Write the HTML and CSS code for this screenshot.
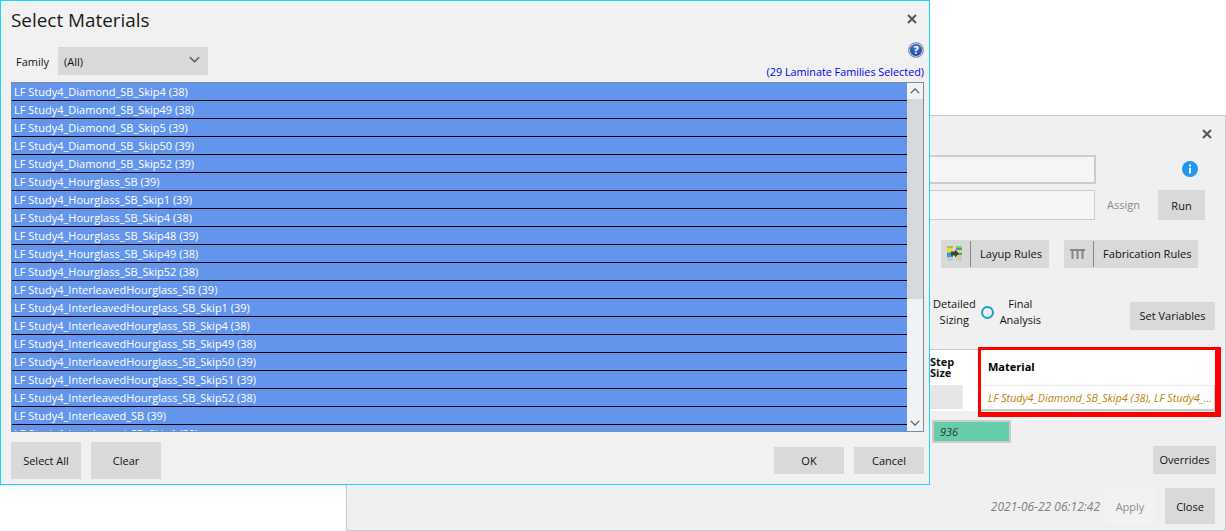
FILE: index.html
```html
<!DOCTYPE html>
<html lang="en">
<head>
<meta charset="utf-8">
<title>Select Materials</title>
<link rel="stylesheet" href="styles.css">
</head>
<body>
<div class="desktop">

  <section class="window back">
    <div class="back-title">
      <svg class="x" viewBox="0 0 10 10"><path d="M1 1L9 9M9 1L1 9"/></svg>
    </div>
    <div class="b-row r1">
      <div class="input thick"></div>
      <span class="info-slot"><svg class="info" viewBox="0 0 16 16"><circle cx="8" cy="8" r="8" fill="#2196f3"/><rect x="7" y="3.5" width="2" height="2" fill="#fff"/><rect x="7" y="6.8" width="2" height="5.7" fill="#fff"/></svg></span>
    </div>
    <div class="b-row r2">
      <div class="input thin"></div>
      <span class="assign">Assign</span>
      <button class="btn run">Run</button>
    </div>
    <div class="b-row r3">
      <button class="btn split layup">
        <span class="ico"><svg viewBox="0 0 15 15" width="15" height="15"><rect x="0" y="0" width="6" height="2" fill="#9ac653"/><rect x="0" y="2" width="6" height="4" fill="#e8dc3a"/><rect x="0" y="6" width="6" height="1" fill="#9ac653"/><rect x="0" y="7" width="6" height="4" fill="#2f9be8"/><rect x="0" y="11" width="6" height="4" fill="#c9c9c9"/><rect x="9" y="0" width="6" height="2" fill="#9ac653"/><rect x="9" y="2" width="6" height="2" fill="#2f9be8"/><rect x="9" y="4" width="6" height="3" fill="#e8dc3a"/><rect x="9" y="7" width="6" height="2" fill="#2f9be8"/><rect x="9" y="9" width="6" height="2" fill="#e8dc3a"/><rect x="9" y="11" width="6" height="4" fill="#c9c9c9"/><path d="M4 5.5h4V3.5L12 7.5l-4 4v-2H4z" fill="#3f3f3f"/></svg></span>
        <span class="lbl">Layup Rules</span>
      </button>
      <button class="btn split fab">
        <span class="ico"><svg viewBox="0 0 15 10" width="15" height="10"><path d="M0 1h15" stroke="#858585" stroke-width="2" fill="none"/><path d="M2.500 1v9M7.500 1v9M12.500 1v9" stroke="#858585" stroke-width="2" fill="none"/></svg></span>
        <span class="lbl">Fabrication Rules</span>
      </button>
    </div>
    <div class="b-row r4">
      <div class="steps">
        <span class="step-label">Detailed<br>Sizing</span>
        <span class="radio"></span>
        <span class="step-label">Final<br>Analysis</span>
      </div>
      <button class="btn setvars">Set Variables</button>
    </div>
    <div class="b-row r5">
      <div class="grid-wrap">
        <div class="cell head step">Step<br>Size</div>
        <div class="cell head mat">Material</div>
        <div class="cell stepval"></div>
        <div class="cell spacer"></div>
        <div class="cell matval">LF Study4_Diamond_SB_Skip4 (38), LF Study4_...</div>
        <div class="redbox"></div>
      </div>
    </div>
    <div class="b-row r6">
      <div class="total"><span>936</span></div>
    </div>
    <div class="b-row r7">
      <button class="btn overrides">Overrides</button>
    </div>
    <div class="b-row r8">
      <span class="stamp">2021-06-22 06:12:42</span>
      <button class="btn apply">Apply</button>
      <button class="btn close">Close</button>
    </div>
  </section>

  <section class="window front">
    <header class="f-title">
      <h1>Select Materials</h1>
      <svg class="x" viewBox="0 0 10 10"><path d="M1 1L9 9M9 1L1 9"/></svg>
    </header>
    <div class="f-filter">
      <div class="family">
        <span class="family-label">Family</span>
        <div class="select"><span>(All)</span>
          <svg class="chev" viewBox="0 0 12 7"><path d="M1 1l5 5 5-5"/></svg>
        </div>
      </div>
      <div class="summary">
        <span class="help">?</span>
        <span class="selected">(29 Laminate Families Selected)</span>
      </div>
    </div>
    <div class="list">
      <ul class="items">
        <li>LF Study4_Diamond_SB_Skip4 (38)</li>
        <li>LF Study4_Diamond_SB_Skip49 (38)</li>
        <li>LF Study4_Diamond_SB_Skip5 (39)</li>
        <li>LF Study4_Diamond_SB_Skip50 (39)</li>
        <li>LF Study4_Diamond_SB_Skip52 (39)</li>
        <li>LF Study4_Hourglass_SB (39)</li>
        <li>LF Study4_Hourglass_SB_Skip1 (39)</li>
        <li>LF Study4_Hourglass_SB_Skip4 (38)</li>
        <li>LF Study4_Hourglass_SB_Skip48 (39)</li>
        <li>LF Study4_Hourglass_SB_Skip49 (38)</li>
        <li>LF Study4_Hourglass_SB_Skip52 (38)</li>
        <li>LF Study4_InterleavedHourglass_SB (39)</li>
        <li>LF Study4_InterleavedHourglass_SB_Skip1 (39)</li>
        <li>LF Study4_InterleavedHourglass_SB_Skip4 (38)</li>
        <li>LF Study4_InterleavedHourglass_SB_Skip49 (38)</li>
        <li>LF Study4_InterleavedHourglass_SB_Skip50 (39)</li>
        <li>LF Study4_InterleavedHourglass_SB_Skip51 (39)</li>
        <li>LF Study4_InterleavedHourglass_SB_Skip52 (38)</li>
        <li>LF Study4_Interleaved_SB (39)</li>
        <li>LF Study4_Interleaved_SB_Skip1 (39)</li>
      </ul>
      <div class="scrollbar">
        <div class="sb-arrow"><svg viewBox="0 0 12 7"><path d="M1 6l5-5 5 5"/></svg></div>
        <div class="sb-thumb"></div>
        <div class="sb-track"></div>
        <div class="sb-arrow"><svg viewBox="0 0 12 7"><path d="M1 1l5 5 5-5"/></svg></div>
      </div>
    </div>
    <footer class="f-foot">
      <div class="foot-left">
        <button class="btn wide">Select All</button>
        <button class="btn wide">Clear</button>
      </div>
      <div class="foot-right">
        <button class="btn wide short">OK</button>
        <button class="btn wide short">Cancel</button>
      </div>
    </footer>
  </section>

</div>
</body>
</html>
```

FILE: styles.css
```css
* { box-sizing: border-box; }
html, body { margin: 0; padding: 0; background: #fff; }
body { font-family: "Open Sans", "Noto Sans", sans-serif; font-size: 11px; color: #111; overflow: hidden; }
.desktop { position: relative; width: 1226px; height: 531px; overflow: hidden; }
.window { position: absolute; }
button { font: inherit; border: 0; padding: 0; color: #111; }
.btn { background: #d9d9d9; display: flex; align-items: center; justify-content: center; }
.x { width: 10px; height: 10px; }
.x path { stroke: #555; stroke-width: 2; fill: none; }

/* back window */
.back { left: 346px; top: 115px; width: 880px; height: 416px; background: #f0f0f0; border: 1px solid #c8c8c8; display: flex; flex-direction: column; }
.back-title { height: 37px; display: flex; align-items: center; justify-content: flex-end; padding: 0 13px 2px 0; }
.b-row { display: flex; justify-content: flex-end; align-items: flex-start; }
.input { background: #f5f5f5; width: 400px; }
.input.thick { height: 29px; border: 2px solid #ccc; border-left: 0; }
.input.thin { height: 30px; border: 1px solid #ccc; border-left: 0; }
.r1 { margin-top: 2px; padding-right: 129px; height: 35px; position: relative; }
.info-slot { position: absolute; right: 27px; top: 6px; display: flex; }
.info { width: 16px; height: 16px; }
.r2 { height: 30px; padding-right: 20px; align-items: center; }
.assign { width: 63px; padding: 0 0 2px 12px; color: #8c8c8c; }
.run { width: 47px; height: 30px; margin-left: 0; }
.r2 .input { margin-right: 0; }
.r3 { margin-top: 20px; padding-right: 27px; gap: 15px; height: 29px; }
.split { height: 28px; justify-content: flex-start; }
.split .ico { width: 30px; height: 28px; display: flex; align-items: center; justify-content: center; position: relative; padding: 0 3px 1px 0; }
.split .ico::after { content: ""; position: absolute; right: 0; top: 1px; bottom: 1px; width: 1px; background: #888; }
.split .lbl { padding: 0 6px 2px 9px; white-space: nowrap; font-size: 11.1px; }
.layup { width: 108px; }
.fab { width: 134px; }
.r4 { margin-top: 33px; padding-right: 10px; height: 47px; justify-content: space-between; padding-left: 586px; }
.steps { display: flex; align-items: center; margin-top: -6px; }
.step-label { text-align: center; line-height: 16px; }
.radio { width: 13px; height: 13px; border: 2px solid #1e9fc4; border-radius: 50%; margin: 0 6px 0 5px; }
.setvars { width: 85px; height: 28px; padding-bottom: 2px; }
.r5 { padding-right: 4px; }
.grid-wrap { position: relative; width: 292px; display: grid; grid-template-columns: 33px 1px 16px 237px 5px; grid-template-rows: 35px 26px; background: #fff; border-top: 1px solid #ccc; margin-bottom: 5px; height: 62px; }
.cell { font-weight: 700; }
.head.step { grid-column: 1 / 3; grid-row: 1; font-size: 11px; line-height: 11px; padding: 6px 0 0 1px; }
.head.mat { grid-column: 4; grid-row: 1; display: flex; align-items: center; padding-left: 9px; padding-bottom: 3px; color: #000; border-right: 1px solid #ddd; }
.stepval { grid-column: 1; grid-row: 2; background: #e6e6e6; margin-bottom: 2px; }
.spacer { grid-column: 2; grid-row: 2; background: #eee; margin-bottom: 2px; }
.matval { grid-column: 4; grid-row: 2; font-weight: 400; font-style: italic; color: #b8860b; white-space: nowrap; overflow: hidden; padding: 0 0 0 9px; display: flex; align-items: center; border-bottom: 2px solid #ccc; border-right: 2px solid #ccc; border-top: 1px solid #eee; font-size: 10.8px; }
.redbox { position: absolute; left: 49px; top: -3px; width: 243px; height: 70px; border-style: solid; border-color: #f00; border-width: 3px 6px 5px 3px; }
.r6 { padding-right: 214px; margin-top: 4px; height: 26px; }
.total { width: 79px; height: 23px; background: #66cdaa; border: 2px solid #ccc; padding-left: 6px; display: flex; align-items: center; font-style: italic; color: #333; }
.r7 { padding-right: 9px; height: 28px; margin-top: 0; }
.overrides { width: 63px; height: 28px; padding-bottom: 2px; }
.r8 { margin-top: 14px; padding-right: 10px; align-items: center; height: 36px; }
.stamp { color: #808080; font-style: italic; font-size: 12px; margin-right: 5px; }
.apply { width: 50px; height: 36px; background: #f2f2f2; color: #8c8c8c; margin-right: 10px; }
.close { width: 50px; height: 36px; }

/* front window */
.front { left: 0; top: 0; width: 930px; height: 485px; background: #f1f1f1; border: 1px solid #1ad5ff; padding: 0 5px 0 10px; display: flex; flex-direction: column; }
.f-title { height: 46px; display: flex; align-items: center; justify-content: space-between; padding-right: 7px; padding-bottom: 8px; }
.f-title h1 { margin: 0; font-size: 18.9px; font-weight: 400; color: #1a1a1a; }
.f-title .x { margin-bottom: 2px; }
.f-filter { height: 35px; display: flex; justify-content: space-between; align-items: flex-start; }
.family { display: flex; align-items: center; }
.family-label { width: 47px; padding-left: 5px; }
.select { width: 150px; height: 28px; background: #d9d9d9; display: flex; align-items: center; justify-content: space-between; padding: 0 8px 0 6px; }
.chev { width: 11px; height: 7px; margin-bottom: 3px; }
.chev path, .sb-arrow path { stroke: #555; stroke-width: 1.5; fill: none; }
.summary { display: flex; flex-direction: column; align-items: flex-end; }
.help { width: 16px; height: 16px; border-radius: 50%; background: radial-gradient(circle at 50% 35%, #4a7bd8, #1c3f97 75%); border: 1px solid #8f9bad; box-shadow: inset 0 0 0 1px #c9d3e3; color: #fff; font-weight: 700; font-size: 11px; line-height: 14px; text-align: center; margin: -5px 0 6px; }
.selected { color: #0000f0; font-size: 10.8px; line-height: 15px; white-space: nowrap; }
.list { height: 350px; border: 1px solid #6d8fb0; display: flex; background: #6495ed; overflow: hidden; }
.items { list-style: none; margin: 0; padding: 0; flex: 1; overflow: hidden; }
.items li { height: 18px; line-height: 17px; padding-left: 2px; color: #fff; background: #6495ed; border-bottom: 1px solid #000; white-space: nowrap; }
.scrollbar { width: 16px; background: #f2f2f2; display: flex; flex-direction: column; }
.sb-arrow { height: 16px; display: flex; align-items: center; justify-content: center; background: #f2f2f2; }
.sb-arrow svg { width: 10px; height: 6px; }
.sb-thumb { height: 200px; background: #d9d9d9; }
.sb-track { flex: 1; }
.f-foot { display: flex; justify-content: space-between; margin-top: 10px; padding-right: 0; }
.foot-left, .foot-right { display: flex; gap: 10px; }
.foot-right { margin-top: 5px; }
.wide { width: 70px; height: 37px; }
.short { height: 27px; }
```
